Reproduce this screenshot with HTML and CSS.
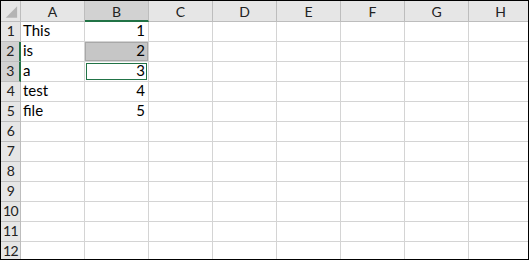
FILE: index.html
```html
<!DOCTYPE html>
<html lang="en">
<head>
  <meta charset="UTF-8" />
  <title>Sheet1</title>
  <link rel="stylesheet" href="styles.css">
</head>
<body>
  <div class="sheet">
    <div class="hd corner">
      <svg width="20" height="20" viewBox="0 0 20 20"><polygon points="17,5 17,17 5,17" fill="#b4b4b4"/></svg>
    </div>
    <div class="hd col">A</div>
    <div class="hd col sel-col">B</div>
    <div class="hd col">C</div>
    <div class="hd col">D</div>
    <div class="hd col">E</div>
    <div class="hd col">F</div>
    <div class="hd col">G</div>
    <div class="hd col">H</div>

    <div class="hd row">1</div>
    <div class="cell">This</div><div class="cell num">1</div>
    <div class="cell"></div><div class="cell"></div><div class="cell"></div><div class="cell"></div><div class="cell"></div><div class="cell"></div>

    <div class="hd row sel-row">2</div>
    <div class="cell">is</div><div class="cell num in-range">2</div>
    <div class="cell"></div><div class="cell"></div><div class="cell"></div><div class="cell"></div><div class="cell"></div><div class="cell"></div>

    <div class="hd row sel-row">3</div>
    <div class="cell">a</div><div class="cell num active">3</div>
    <div class="cell"></div><div class="cell"></div><div class="cell"></div><div class="cell"></div><div class="cell"></div><div class="cell"></div>

    <div class="hd row">4</div>
    <div class="cell">test</div><div class="cell num">4</div>
    <div class="cell"></div><div class="cell"></div><div class="cell"></div><div class="cell"></div><div class="cell"></div><div class="cell"></div>

    <div class="hd row">5</div>
    <div class="cell">file</div><div class="cell num">5</div>
    <div class="cell"></div><div class="cell"></div><div class="cell"></div><div class="cell"></div><div class="cell"></div><div class="cell"></div>

    <div class="hd row">6</div>
    <div class="cell"></div><div class="cell"></div><div class="cell"></div><div class="cell"></div><div class="cell"></div><div class="cell"></div><div class="cell"></div><div class="cell"></div>
    <div class="hd row">7</div>
    <div class="cell"></div><div class="cell"></div><div class="cell"></div><div class="cell"></div><div class="cell"></div><div class="cell"></div><div class="cell"></div><div class="cell"></div>
    <div class="hd row">8</div>
    <div class="cell"></div><div class="cell"></div><div class="cell"></div><div class="cell"></div><div class="cell"></div><div class="cell"></div><div class="cell"></div><div class="cell"></div>
    <div class="hd row">9</div>
    <div class="cell"></div><div class="cell"></div><div class="cell"></div><div class="cell"></div><div class="cell"></div><div class="cell"></div><div class="cell"></div><div class="cell"></div>
    <div class="hd row">10</div>
    <div class="cell"></div><div class="cell"></div><div class="cell"></div><div class="cell"></div><div class="cell"></div><div class="cell"></div><div class="cell"></div><div class="cell"></div>
    <div class="hd row">11</div>
    <div class="cell"></div><div class="cell"></div><div class="cell"></div><div class="cell"></div><div class="cell"></div><div class="cell"></div><div class="cell"></div><div class="cell"></div>
    <div class="hd row">12</div>
    <div class="cell"></div><div class="cell"></div><div class="cell"></div><div class="cell"></div><div class="cell"></div><div class="cell"></div><div class="cell"></div><div class="cell"></div>
  </div>
</body>
</html>
```

FILE: styles.css
```css
body {
  margin: 0;
  background: #fff;
  font-family: Lato, "Open Sans", sans-serif;
  font-size: 14px;
  color: #000;
}

.sheet {
  width: 529px;
  height: 260px;
  box-sizing: border-box;
  border: 1px solid #000;
  overflow: hidden;
  display: grid;
  grid-template-columns: 20px repeat(8, 64px);
  grid-template-rows: 21px repeat(12, 20px);
}

.sheet > div {
  box-sizing: border-box;
  border-right: 1px solid #d4d4d4;
  border-bottom: 1px solid #d4d4d4;
  display: flex;
  white-space: nowrap;
}

.hd {
  background: #e6e6e6;
  color: #222;
}

.sheet > .hd {
  border-color: #bdbdbd;
}

.corner {
  padding: 0;
}

.col {
  justify-content: center;
  align-items: center;
  padding-top: 1px;
}

.row {
  justify-content: center;
  align-items: flex-end;
  padding-bottom: 2px;
  font-size: 14px;
  letter-spacing: -0.5px;
}

.sheet > .sel-col {
  background: #d2d2d2;
  border-bottom: 2px solid #217346;
}

.sheet > .sel-row {
  background: #d2d2d2;
  border-right: 2px solid #217346;
}

.cell {
  align-items: flex-end;
  padding: 0 3px 2px 2px;
  font-size: 15px;
}

.num {
  justify-content: flex-end;
}

.in-range {
  background: #c6c6c6;
  box-shadow: inset 0 0 0 1px #a8a8a8;
}

.active {
  box-shadow: inset 0 0 0 1px #fff, inset 0 0 0 2px #217346;
}
```
